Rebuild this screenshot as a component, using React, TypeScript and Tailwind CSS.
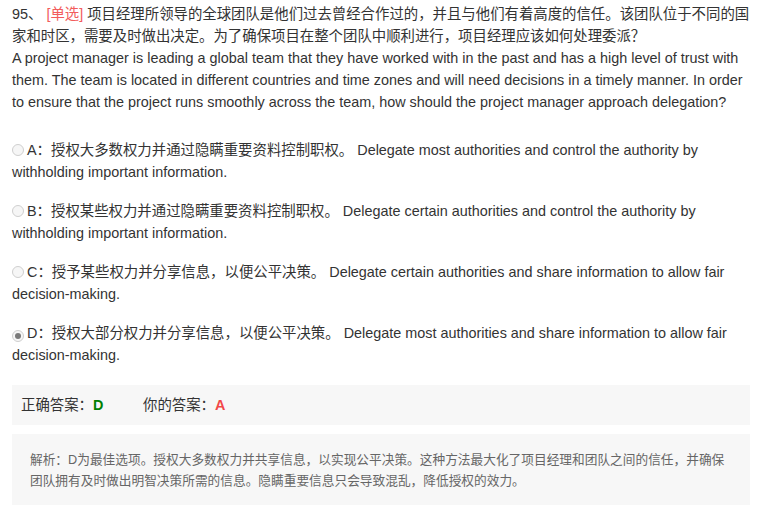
const font = "font-['Liberation_Sans','Noto_Sans_CJK_SC',sans-serif]";

const options = [
  { key: 'A', zh: '授权大多数权力并通过隐瞒重要资料控制职权。', en: 'Delegate most authorities and control the authority by withholding important information.' },
  { key: 'B', zh: '授权某些权力并通过隐瞒重要资料控制职权。', en: 'Delegate certain authorities and control the authority by withholding important information.' },
  { key: 'C', zh: '授予某些权力并分享信息，以便公平决策。', en: 'Delegate certain authorities and share information to allow fair decision-making.' },
  { key: 'D', zh: '授权大部分权力并分享信息，以便公平决策。', en: 'Delegate most authorities and share information to allow fair decision-making.' },
];

function Radio({ checked }: { checked: boolean }) {
  return (
    <span className="inline-flex w-[12px] h-[12px] mr-[3px] rounded-full border border-[#cfcfcf] bg-[#f6f6f6] items-center justify-center align-[-1px]">
      {checked && <span className="w-[6px] h-[6px] rounded-full bg-[#7a7a7a]" />}
    </span>
  );
}

export default function App() {
  return (
    <div className={`${font} bg-white w-[759px] h-[505px] overflow-hidden pl-3 pr-[9px] pt-[3px] text-[14.4px] leading-[22px] text-[#333]`}>
      {/* Question */}
      <div>
        95、 <span className="text-[#f25c5c]">[单选]</span> 项目经理所领导的全球团队是他们过去曾经合作过的，并且与他们有着高度的信任。该团队位于不同的国家和时区，需要及时做出决定。为了确保项目在整个团队中顺利进行，项目经理应该如何处理委派？
        <br />
        A project manager is leading a global team that they have worked with in the past and has a high level of trust with them. The team is located in different countries and time zones and will need decisions in a timely manner. In order to ensure that the project runs smoothly across the team, how should the project manager approach delegation?
      </div>

      {/* Options */}
      <div className="mt-[26px] flex flex-col gap-[17px]">
        {options.map((o) => (
          <div key={o.key}>
            <Radio checked={o.key === 'D'} />
            {o.key}：{o.zh} {o.en}
          </div>
        ))}
      </div>

      {/* Answer */}
      <div className="mt-[19px] h-[40px] bg-[#f7f7f7] flex items-center pl-[9px] text-[#333]">
        <span className="w-[122px]">
          正确答案：<span className="font-bold text-[#008000]">D</span>
        </span>
        <span>
          你的答案：<span className="font-bold text-[#f24848]">A</span>
        </span>
      </div>

      {/* Analysis */}
      <div className="mt-[9px] bg-[#f7f7f7] px-[18px] pt-[16px] pb-[24px] text-[12.7px] leading-[21px] text-[#666]">
        解析：D为最佳选项。授权大多数权力并共享信息，以实现公平决策。这种方法最大化了项目经理和团队之间的信任，并确保团队拥有及时做出明智决策所需的信息。隐瞒重要信息只会导致混乱，降低授权的效力。
      </div>
    </div>
  );
}
